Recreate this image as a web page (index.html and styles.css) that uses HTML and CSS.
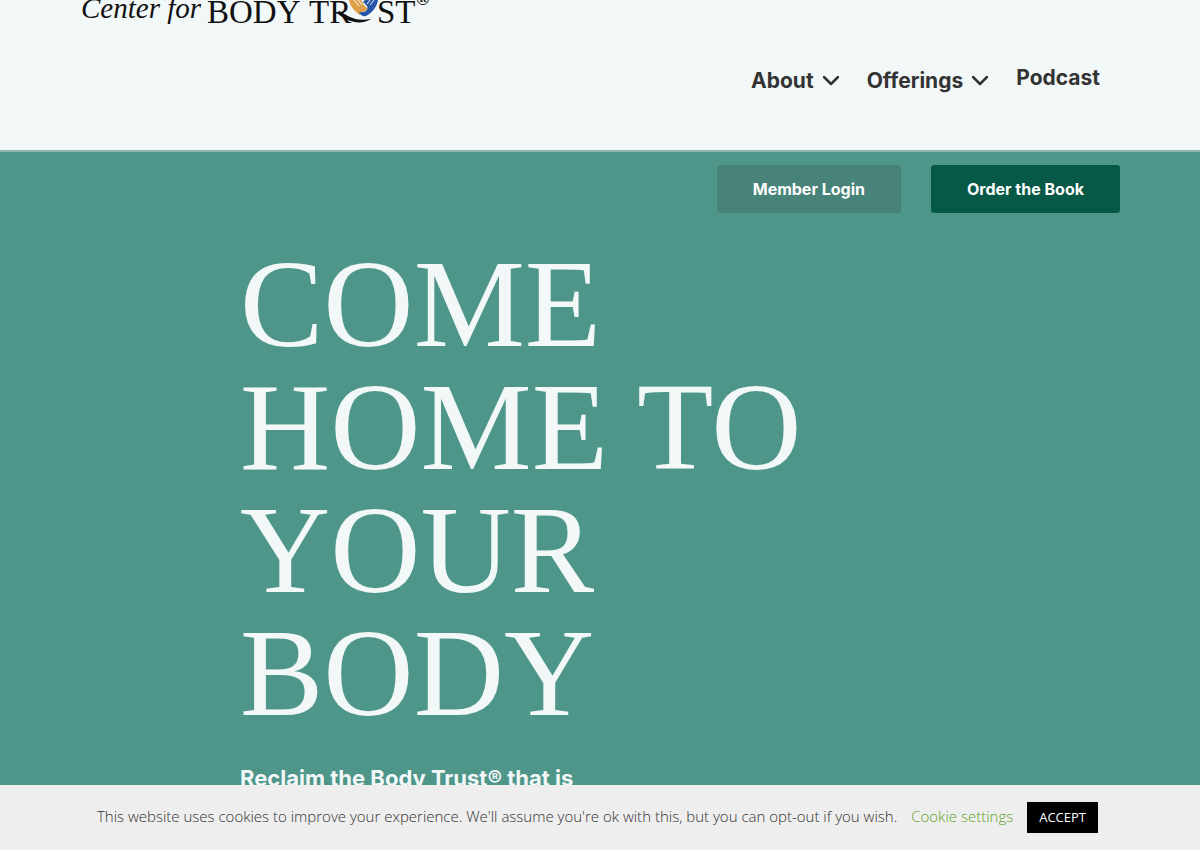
FILE: index.html
```html
<!DOCTYPE html>
<html lang="en">
<head>
    <meta charset="UTF-8">
    <meta name="viewport" content="width=device-width, initial-scale=1.0">
    <title>Center for Body Trust</title>
    <link rel="stylesheet" href="styles.css">
</head>
<body>
    <header class="site-header">
        <a href="#" class="logo" aria-label="Center for Body Trust">
            <svg width="350" height="30" viewBox="0 0 350 30">
                <text class="logo-script" x="1" y="18">Center for</text>
                <text class="logo-caps" x="127" y="23">BODY</text>
                <text class="logo-caps" x="229" y="23">TR</text>
                <!-- hands forming a heart, in place of the U -->
                <path d="M259 11C266 14 272 22 291 19C282 25 268 23 257 13Z" fill="#111"/>
                <path d="M269 0H281L284 5L288 9C286 11 284 12 282 12L280 15C274 11 270 6 269 0Z" fill="#e0a04a"/>
                <path d="M298 0C297 7 292 13 286 16C283 17 280 15 279 12C285 13 289 10 287 6L283 2L285 0Z" fill="#2455a8"/>
                <path d="M274 0L279 6M278 0L282 5M290 0L287 4M294 0L290 5" stroke="#f2f7f8" fill="none"/>
                <text class="logo-caps" x="297" y="23">ST</text>
                <text class="logo-mark" x="336" y="5">®</text>
            </svg>
        </a>
        <nav class="main-nav">
            <a href="#" class="has-menu">About
                <svg class="chevron" width="16" height="10" viewBox="0 0 16 10"><path d="M1 1L8 8L15 1"/></svg>
            </a>
            <a href="#" class="has-menu">Offerings
                <svg class="chevron" width="16" height="10" viewBox="0 0 16 10"><path d="M1 1L8 8L15 1"/></svg>
            </a>
            <a href="#">Podcast</a>
        </nav>
    </header>

    <main class="hero">
        <div class="hero-actions">
            <a href="#" class="btn btn-login">Member Login</a>
            <a href="#" class="btn btn-order">Order the Book</a>
        </div>
        <div class="hero-content">
            <h1>COME HOME TO YOUR BODY</h1>
            <p>Reclaim the Body Trust® that is</p>
        </div>
    </main>

    <div class="cookie-bar">
        <span>This website uses cookies to improve your experience. We'll assume you're ok with this, but you can opt-out if you wish.</span>
        <a href="#" class="cookie-settings">Cookie settings</a>
        <button type="button" class="cookie-accept">ACCEPT</button>
    </div>
</body>
</html>
```
FILE: styles.css
```css
* {
    margin: 0;
    padding: 0;
    box-sizing: border-box;
}

body {
    font-family: Inter, "Liberation Sans", sans-serif;
    background-color: #4e968a;
    color: #333;
}

a {
    color: inherit;
    text-decoration: none;
}

.site-header {
    padding: 0 80px 53px;
    background-color: #f2f7f8;
    border-bottom: 2px solid #8fbab3;
}

.logo {
    display: block;
}

.logo svg {
    display: block;
}

.logo text {
    font-family: "Liberation Serif", serif;
    fill: #111;
}

.logo .logo-script {
    font-size: 29px;
    font-style: italic;
}

.logo .logo-caps {
    font-size: 33px;
}

.logo .logo-mark {
    font-size: 18px;
    font-weight: 700;
}

.main-nav {
    display: flex;
    justify-content: flex-end;
    align-items: flex-start;
    gap: 28px;
    padding: 32px 20px 0 0;
    font-size: 21px;
    font-weight: 700;
    line-height: 32px;
}

.has-menu {
    display: flex;
    align-items: center;
    gap: 9px;
    padding-top: 3px;
}

.chevron path {
    fill: none;
    stroke: #333;
    stroke-width: 2.5;
    stroke-linecap: round;
    stroke-linejoin: round;
}

.hero {
    padding: 13px 80px 60px;
    color: #f2f7f8;
}

.hero-actions {
    display: flex;
    justify-content: flex-end;
    gap: 30px;
}

.btn {
    padding: 0 36px;
    border-radius: 3px;
    color: #fff;
    font-size: 16px;
    font-weight: 700;
    line-height: 48px;
}

.btn-login {
    background-color: #488379;
}

.btn-order {
    background-color: #065947;
}

.hero-content {
    max-width: 800px;
    padding: 30px 0 0 160px;
}

.hero-content h1 {
    font-family: "Liberation Serif", serif;
    font-size: 125px;
    font-weight: 400;
    line-height: 123px;
}

.hero-content p {
    margin-top: 27px;
    font-size: 22px;
    font-weight: 700;
    line-height: 32px;
}

.cookie-bar {
    position: fixed;
    left: 0;
    right: 0;
    bottom: 0;
    display: flex;
    justify-content: center;
    align-items: baseline;
    padding: 17px 15px 17px 10px;
    background-color: #eee;
    font-family: "Open Sans", sans-serif;
    font-size: 15px;
    font-weight: 300;
}

.cookie-settings {
    margin: 0 14px;
    color: #61a229;
}

.cookie-accept {
    padding: 0 12px;
    border: none;
    background-color: #000;
    color: #fff;
    font-family: inherit;
    font-size: 13px;
    line-height: 31px;
    cursor: pointer;
}
```
